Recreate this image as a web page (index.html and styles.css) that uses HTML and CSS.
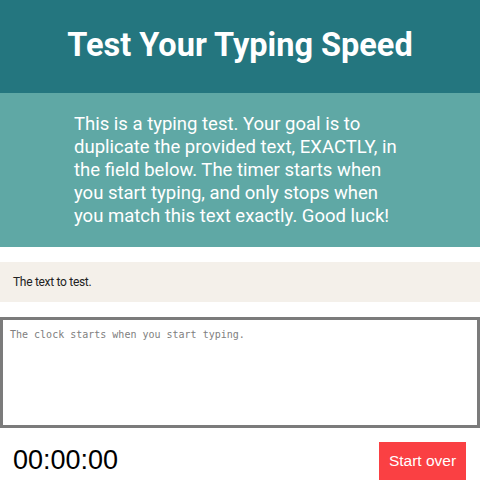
FILE: index.html
```html
<!DOCTYPE html>
<html lang="en">
<head>
<meta charset="utf-8">
<title>Typing Speed Test</title>
<link rel="stylesheet" href="styles.css">
</head>
<body>
<header class="masthead">
  <h1 class="title">Test Your Typing Speed</h1>
</header>
<section class="intro">
  <p class="intro-text">This is a typing test. Your goal is to duplicate the provided text, EXACTLY, in the field below. The timer starts when you start typing, and only stops when you match this text exactly. Good luck!</p>
</section>
<main class="test-area">
  <div class="origin-text"><p>The text to test.</p></div>
  <textarea class="test-input" placeholder="The clock starts when you start typing."></textarea>
  <div class="meta">
    <div class="timer">00:00:00</div>
    <button class="reset">Start over</button>
  </div>
</main>
</body>
</html>
```
FILE: styles.css
```css
html, body {
  margin: 0;
  padding: 0;
  background: #ffffff;
  font-family: Roboto, "Liberation Sans", sans-serif;
  overflow: hidden;
}

.masthead {
  background: #24767f;
  height: 93px;
  box-sizing: border-box;
  padding-top: 25px;
}

.title {
  margin: 0;
  color: #ffffff;
  font-family: Roboto, sans-serif;
  font-weight: 700;
  font-size: 32.5px;
  line-height: 40px;
  text-align: center;
}

.intro {
  background: #5fa8a5;
  padding: 20px 0 19px;
}

.intro-text {
  margin: 0 auto;
  max-width: 332px;
  color: #ffffff;
  font-size: 18.5px;
  line-height: 23px;
}

.test-area {
  padding-top: 15px;
}

.origin-text {
  background: #f4f0ea;
  height: 40px;
  padding: 0 13px;
}

.origin-text p {
  margin: 0;
  font-size: 12px;
  letter-spacing: -0.3px;
  line-height: 40px;
  color: #222222;
}

.test-input {
  display: block;
  box-sizing: border-box;
  width: 100%;
  height: 111px;
  margin: 15px 0 0;
  border: 3px solid #7b7b7b;
  padding: 8px 7px;
  font-family: "DejaVu Sans Mono", "Liberation Mono", monospace;
  font-size: 10px;
  line-height: 14px;
  resize: none;
  outline: none;
}

.test-input::placeholder {
  color: #808080;
}

.meta {
  display: flex;
  justify-content: space-between;
  align-items: flex-start;
  padding: 0 14px 0 13px;
  margin-top: 14px;
}

.timer {
  font-family: "Liberation Sans", Arial, sans-serif;
  font-size: 27px;
  line-height: 31px;
  padding-top: 3px;
  color: #000000;
}

.reset {
  background: #fa4043;
  color: #ffffff;
  border: none;
  font-family: "Liberation Sans", Arial, sans-serif;
  font-size: 15.5px;
  line-height: 18px;
  white-space: nowrap;
  text-align: center;
  padding: 10px 0 20px;
  width: 87px;
}
```
